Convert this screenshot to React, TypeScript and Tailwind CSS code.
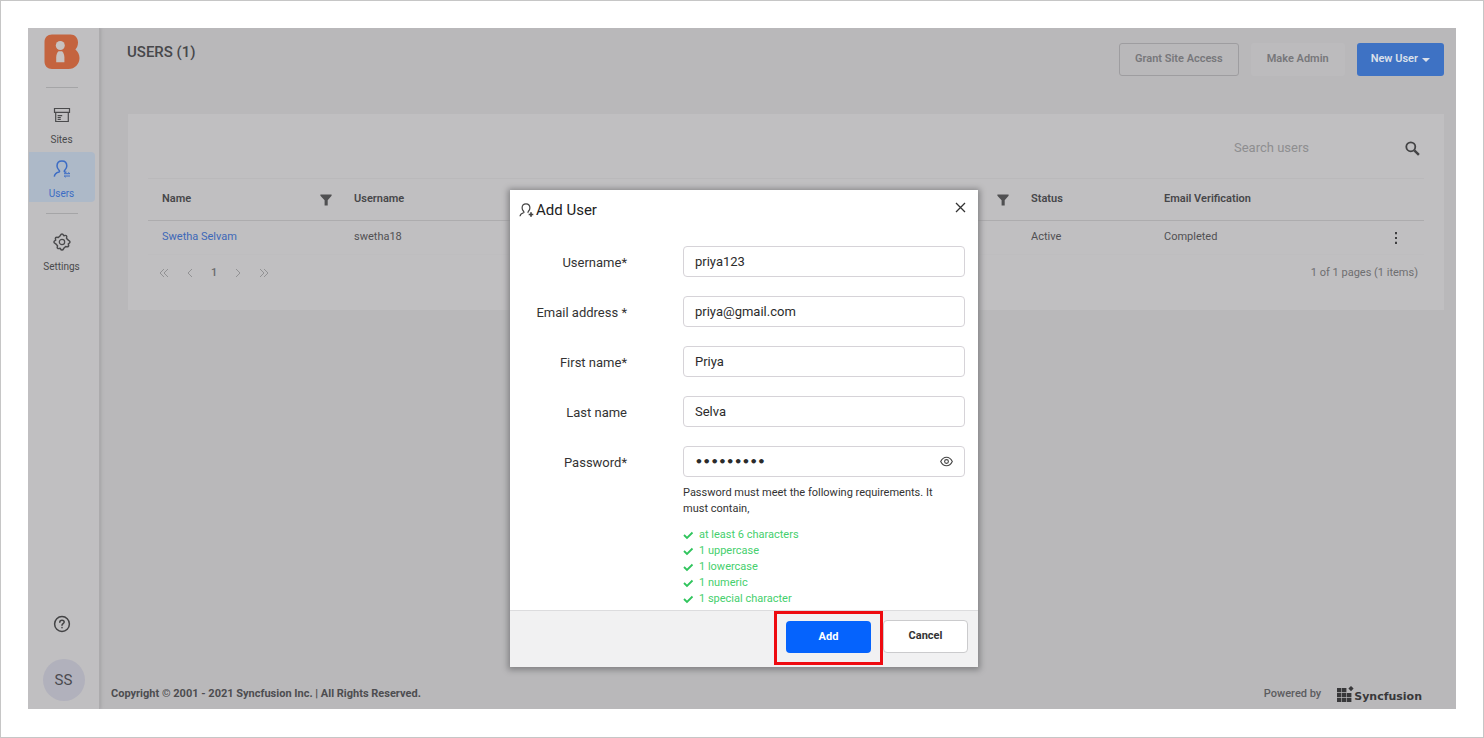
import { useState } from 'react';
import type { ReactNode } from 'react';

type Field = { id: string; label: string; value: string; type: string };

const FIELDS: Field[] = [
  { id: 'username', label: 'Username*', value: 'priya123', type: 'text' },
  { id: 'email', label: 'Email address *', value: 'priya@gmail.com', type: 'text' },
  { id: 'first-name', label: 'First name*', value: 'Priya', type: 'text' },
  { id: 'last-name', label: 'Last name', value: 'Selva', type: 'text' },
  { id: 'password', label: 'Password*', value: 'Priya@123', type: 'password' },
];

const PASSWORD_RULES = ['at least 6 characters', '1 uppercase', '1 lowercase', '1 numeric', '1 special character'];

const Logo = () => (
  <svg width="36" height="36" viewBox="0 0 36 36" aria-label="Bold BI">
    <path
      d="M8 .5h18.500c4.500 0 7.500 3.500 7.500 8 0 3-1 5.300-2.600 7 2.500 1.900 4.100 5 4.100 8.500 0 6-4.500 11-11 11H8c-4.500 0-7.500-3-7.500-7.500V8C.5 3.500 3.500.5 8 .5z"
      fill="#c4643f"
    />
    <circle cx="16.300" cy="11.500" r="4.500" fill="#c8c2c0" />
    <path d="M14.500 17.200h3.600c1.500 1.500 2.300 3.700 2.300 6.300v4.700h-8.200v-4.700c0-2.600.8-4.800 2.300-6.300z" fill="#c8c2c0" />
  </svg>
);

const SitesIcon = () => (
  <svg width="18" height="18" viewBox="0 0 18 18" fill="none" stroke="currentColor" strokeWidth="1.200">
    <path d="M1.500 2.500h15v3.800h-15zM2.700 6.300v9.200h12.600V6.300" />
    <path d="M4.600 9.700h4.600M4.600 11.500h3.200M4.600 13.300h3.200" />
  </svg>
);

const UsersIcon = () => (
  <svg width="18" height="18" viewBox="0 0 18 18" fill="none" stroke="currentColor" strokeWidth="1.500">
    <path d="M1.300 16.700c.3-2.800 1.800-4 4.700-4.700.7-.2.700-1 .2-1.600C4.900 9 4 7.600 4 5.900 4 2.900 5.900.9 8.900.9s4.900 2 4.900 5c0 1.700-.9 3.100-2.200 4.500-.5.600-.5 1.400.3 1.600l1.500.3" />
    <path d="M11 13.700h5.900l-1.500-1.300M17 16h-5.800l1.500 1.200" strokeWidth="1" />
  </svg>
);

// eight rounded lobes around a small ring
const GearIcon = () => (
  <svg width="18" height="18" viewBox="0 0 18 18" fill="none" stroke="currentColor" strokeWidth="1.500" strokeLinejoin="round">
    <path d="M7.200 2.700Q9-.9 10.800 2.700 14.600 1.400 13.500 5.300 13.400 5.300 15.300 7.200 18.700 9 15.300 10.800 16.600 14.600 12.700 13.500L10.800 15.300Q9 18.900 7.200 15.300 3.400 16.600 4.500 12.700L2.700 10.800Q-.9 9 2.700 7.200 1.400 3.400 5.300 4.500z" />
    <circle cx="9" cy="9" r="2.700" strokeWidth="1.200" />
  </svg>
);

const HelpIcon = () => (
  <svg width="18" height="18" viewBox="0 0 18 18" fill="none" stroke="currentColor" strokeWidth="1.500" strokeLinecap="round">
    <circle cx="9" cy="9" r="7.400" />
    <path d="M6.800 7.200c0-1.300 1-2 2.200-2s2.200.7 2.200 1.900c0 1.500-2.200 1.600-2.200 3.200M9 12.600v.1" />
  </svg>
);

const AddUserIcon = () => (
  <svg width="15" height="15" viewBox="0 0 15 15" fill="none" stroke="#444" strokeWidth="1.200">
    <path d="M1 13.300c.2-2.100 1.500-2.900 3.500-3.500.6-.2.600-.8.200-1.300-1-1.100-1.600-2.200-1.600-3.600 0-2.500 1.600-4.100 3.900-4.100s3.900 1.600 3.900 4.100c0 1.400-.6 2.500-1.600 3.600-.4.500-.4 1.100.1 1.300" />
    <path d="M12 9.200v4.600M9.700 11.500h4.600" strokeWidth="1.700" />
  </svg>
);

const FilterIcon = () => (
  <svg width="12" height="12" viewBox="0 0 12 12" fill="#505052">
    <path d="M.4.500h11.200v1.300L7.700 6.300v5.200H4.600V6.300L.4 1.800z" />
  </svg>
);

const SearchIcon = () => (
  <svg width="15" height="15" viewBox="0 0 15 15" fill="none" stroke="currentColor">
    <circle cx="5.800" cy="5.800" r="4.500" strokeWidth="1.800" />
    <path d="M9.300 9.300l4.600 4.600" strokeWidth="2.400" />
  </svg>
);

const EyeIcon = () => (
  <svg width="13" height="11" viewBox="0 0 13 11" fill="none" stroke="#444" strokeWidth="1.100">
    <path d="M.7 5.500C2 2.800 4 1.200 6.500 1.200s4.500 1.600 5.800 4.300c-1.300 2.700-3.300 4.300-5.800 4.300S2 8.200.7 5.500z" />
    <circle cx="6.500" cy="5.500" r="1.900" />
  </svg>
);

const CheckIcon = () => (
  <svg width="11" height="9" viewBox="0 0 11 9" fill="none" stroke="#2fc45c" strokeWidth="1.800">
    <path d="M1 4l3 3 5.500-5.500" />
  </svg>
);

const SyncfusionMark = () => (
  <svg width="17" height="17" viewBox="0 0 17 17" fill="#38383a">
    <path d="M0 2h4.400v4.200H0zM5 2h4.400v4.200H5zM0 6.900h4.400V11H0zM5 6.900h4.400V11H5zM10 6.900h4.400V11H10zM0 11.700h4.400V16H0zM5 11.700h4.400V16H5zM10 11.700h4.400V16H10z" />
    <path d="M14 0l2.600 2.600L14 5.200l-2.600-2.600z" />
  </svg>
);

const Chevrons = ({ count, flip }: { count: number; flip?: boolean }) => (
  <svg width="10" height="10" viewBox="0 0 10 10" fill="none" stroke="currentColor" className={flip ? 'rotate-180' : ''}>
    <path d={count === 2 ? 'M5 1L1 5l4 4M9 1L5 5l4 4' : 'M7 1L3 5l4 4'} />
  </svg>
);

const NavItem = ({ label, icon, active }: { label: string; icon: ReactNode; active?: boolean }) => (
  <a
    href="#"
    className={`flex h-[50px] w-[66px] flex-col items-center gap-2 rounded-r pt-2 text-[10px] leading-4 ${
      active ? 'bg-[#adb9c8] text-[#3c6cc4]' : 'text-[#4a4a4c]'
    }`}
  >
    {icon}
    {label}
  </a>
);

const Sidebar = () => (
  <nav className="flex w-[72px] shrink-0 flex-col items-center border-r border-[#acabad] bg-[#c0bfc1] pt-[6px] pr-1 pb-2 shadow-[1px_0_3px_#a3a2a4]">
    <Logo />
    <hr className="mt-[17px] mb-[10px] w-8 border-[#a5a5a7]" />
    <NavItem label="Sites" icon={<SitesIcon />} />
    <div className="mt-1">
      <NavItem label="Users" icon={<UsersIcon />} active />
    </div>
    <hr className="my-[11px] w-8 border-[#a5a5a7]" />
    <NavItem label="Settings" icon={<GearIcon />} />
    <button type="button" aria-label="Help" className="mt-auto text-[#434345]">
      <HelpIcon />
    </button>
    <button type="button" className="mt-[26px] ml-1 h-[42px] w-[42px] rounded-full bg-[#b1b1bc] text-[15px] text-[#4b4b50]">
      SS
    </button>
  </nav>
);

const UsersTable = () => (
  <table className="w-full table-fixed border-t border-[#bab9bb] text-left">
    <colgroup>
      <col className="w-[192px]" />
      <col />
      <col className="w-[133px]" />
      <col className="w-[218px]" />
      <col className="w-14" />
    </colgroup>
    <thead>
      <tr className="h-[42px] border-b border-[#adacae] text-[#47474a]">
        {['Name', 'Username', 'Status', 'Email Verification', ''].map((title, index) => (
          <th key={title} className="pr-2 pl-[14px] font-semibold">
            <div className="flex items-center justify-between">
              {title}
              {index < 2 ? <FilterIcon /> : null}
            </div>
          </th>
        ))}
      </tr>
    </thead>
    <tbody>
      <tr className="h-[34px] border-b border-[#bebdbf] text-[#505053]">
        <td className="pl-[14px]">
          <a href="#" className="text-[#3d68b8]">Swetha Selvam</a>
        </td>
        <td className="pl-[14px]">swetha18</td>
        <td className="pl-[14px]">Active</td>
        <td className="pl-[14px]">Completed</td>
        <td>
          <button type="button" aria-label="Row actions" className="mx-auto block">
            <svg width="4" height="12" viewBox="0 0 4 12" fill="#3f3f41">
              <path d="M1 0h2v2.200H1zM1 4.900h2v2.200H1zM1 9.800h2V12H1z" />
            </svg>
          </button>
        </td>
      </tr>
    </tbody>
  </table>
);

const Pager = () => (
  <div className="flex h-9 items-center justify-between pr-[6px] pl-[11px] text-[#6e6e70]">
    <div className="flex items-center gap-4 text-[#929294]">
      <button type="button" aria-label="First page"><Chevrons count={2} /></button>
      <button type="button" aria-label="Previous page"><Chevrons count={1} /></button>
      <span className="font-medium text-[#6a6a6c]">1</span>
      <button type="button" aria-label="Next page"><Chevrons count={1} flip /></button>
      <button type="button" aria-label="Last page"><Chevrons count={2} flip /></button>
    </div>
    1 of 1 pages (1 items)
  </div>
);

const AddUserDialog = () => {
  const [values, setValues] = useState<Record<string, string>>(
    Object.fromEntries(FIELDS.map((field) => [field.id, field.value])),
  );
  const [isPasswordShown, setIsPasswordShown] = useState(false);

  return (
    <div role="dialog" aria-label="Add User" className="w-[468px] bg-white text-[#333] shadow-[0_1px_6px_2px_#828284]">
      <div className="flex h-[34px] items-end justify-between pr-3 pl-[9px]">
        <h2 className="flex items-center gap-[2px] text-[15px] leading-7 text-[#222]">
          <AddUserIcon />
          Add User
        </h2>
        <button type="button" aria-label="Close" className="mb-[11px]">
          <svg width="11" height="11" viewBox="0 0 11 11" stroke="#333" strokeWidth="1.300">
            <path d="M1 1l9 9M10 1l-9 9" />
          </svg>
        </button>
      </div>

      <div className="flex flex-col gap-[19px] pt-[22px] pr-[13px]">
        {FIELDS.map((field) => (
          <div key={field.id} className="flex gap-14">
            <label htmlFor={field.id} className="w-[117px] pt-[7px] text-right text-[13px] leading-5">
              {field.label}
            </label>
            <div className="relative flex-1">
              <input
                id={field.id}
                type={field.type === 'password' && isPasswordShown ? 'text' : field.type}
                value={values[field.id]}
                onChange={(event) => setValues((prev) => ({ ...prev, [field.id]: event.target.value }))}
                className={`block h-[31px] w-full rounded-[4px] border border-[#d6d3d8] px-[11px] text-[13px] text-[#2b2b2b] outline-none ${
                  field.type === 'password' && !isPasswordShown ? "font-['DejaVu_Sans_Mono'] font-bold" : ''
                }`}
              />
              {field.type === 'password' ? (
                <button
                  type="button"
                  aria-label="Show password"
                  onClick={() => setIsPasswordShown((prev) => !prev)}
                  className="absolute top-[10px] right-3"
                >
                  <EyeIcon />
                </button>
              ) : null}
            </div>
          </div>
        ))}
      </div>

      <div className="pt-2 pr-6 pb-[3px] pl-[173px] text-[11px] leading-4">
        <p>Password must meet the following requirements. It must contain,</p>
        <ul className="mt-[10px] text-[#45cf6d]">
          {PASSWORD_RULES.map((rule) => (
            <li key={rule} className="flex items-center gap-[5px]">
              <CheckIcon />
              {rule}
            </li>
          ))}
        </ul>
      </div>

      <div className="flex h-[57px] items-start justify-end border-t border-[#dcdcde] bg-[#f1f1f2] pr-[10px] text-[11px] font-bold">
        <div className="border-3 border-[#ee0a10] p-[9px] pt-[7px]">
          <button type="button" className="block h-8 w-[85px] rounded-[4px] bg-[#0563fd] text-white">
            Add
          </button>
        </div>
        <button type="button" className="mt-[9px] h-[33px] w-[85px] rounded-[4px] border border-[#cbcbcd] bg-white">
          Cancel
        </button>
      </div>
    </div>
  );
};

export default function App() {
  return (
    <div className="flex min-h-screen border border-[#c6c6c6] bg-white p-[27px] pb-7 font-['Roboto',sans-serif]">
      <div className="relative flex flex-1 overflow-hidden bg-[#b9b8ba] text-[11px]">
        <Sidebar />
        <main className="flex flex-1 flex-col pr-3">
          <header className="flex items-start justify-between pt-[15px] pl-[27px] font-semibold">
            <h1 className="text-[15px] leading-[18px] font-medium text-[#47474a]">USERS (1)</h1>
            <div className="flex gap-3">
              <button type="button" className="h-[33px] rounded-[3px] border border-[#9e9da0] px-[15px] text-[#77777a]">
                Grant Site Access
              </button>
              <button type="button" className="h-[33px] rounded-[3px] bg-[#bcbbbd] px-4 text-[#77777a]">
                Make Admin
              </button>
              <button
                type="button"
                className="flex h-[33px] items-center gap-1 rounded-[3px] bg-[#3e72c4] px-[14px] text-[#dbe0ea]"
              >
                New User
                <svg width="8" height="4" viewBox="0 0 8 4" fill="currentColor">
                  <path d="M0 0h8L4 4z" />
                </svg>
              </button>
            </div>
          </header>

          <section className="mt-[38px] ml-7 bg-[#c0bfc1] px-5 pb-[19px]">
            <div className="flex h-16 items-center justify-end gap-3 pt-1 pr-1 text-[#434345]">
              <input
                type="text"
                aria-label="Search users"
                placeholder="Search users"
                className="w-[159px] bg-transparent text-[13px] outline-none placeholder:text-[#8e8e90]"
              />
              <button type="button" aria-label="Search"><SearchIcon /></button>
            </div>
            <UsersTable />
            <Pager />
          </section>

          <footer className="mt-auto flex h-[30px] items-center justify-between pr-[22px] pl-[11px] text-[#4d4d50]">
            <p className="font-bold">Copyright © 2001 - 2021 Syncfusion Inc. | All Rights Reserved.</p>
            <div className="flex items-center gap-4">
              <span className="font-medium text-[#5c5c5f]">Powered by</span>
              <span className="flex items-end font-['DejaVu_Sans'] leading-3 font-bold text-[#38383a]">
                <SyncfusionMark />
                Syncfusion
              </span>
            </div>
          </footer>
        </main>

        <div className="absolute inset-0 flex items-start justify-center pt-[162px] pl-1">
          <AddUserDialog />
        </div>
      </div>
    </div>
  );
}
